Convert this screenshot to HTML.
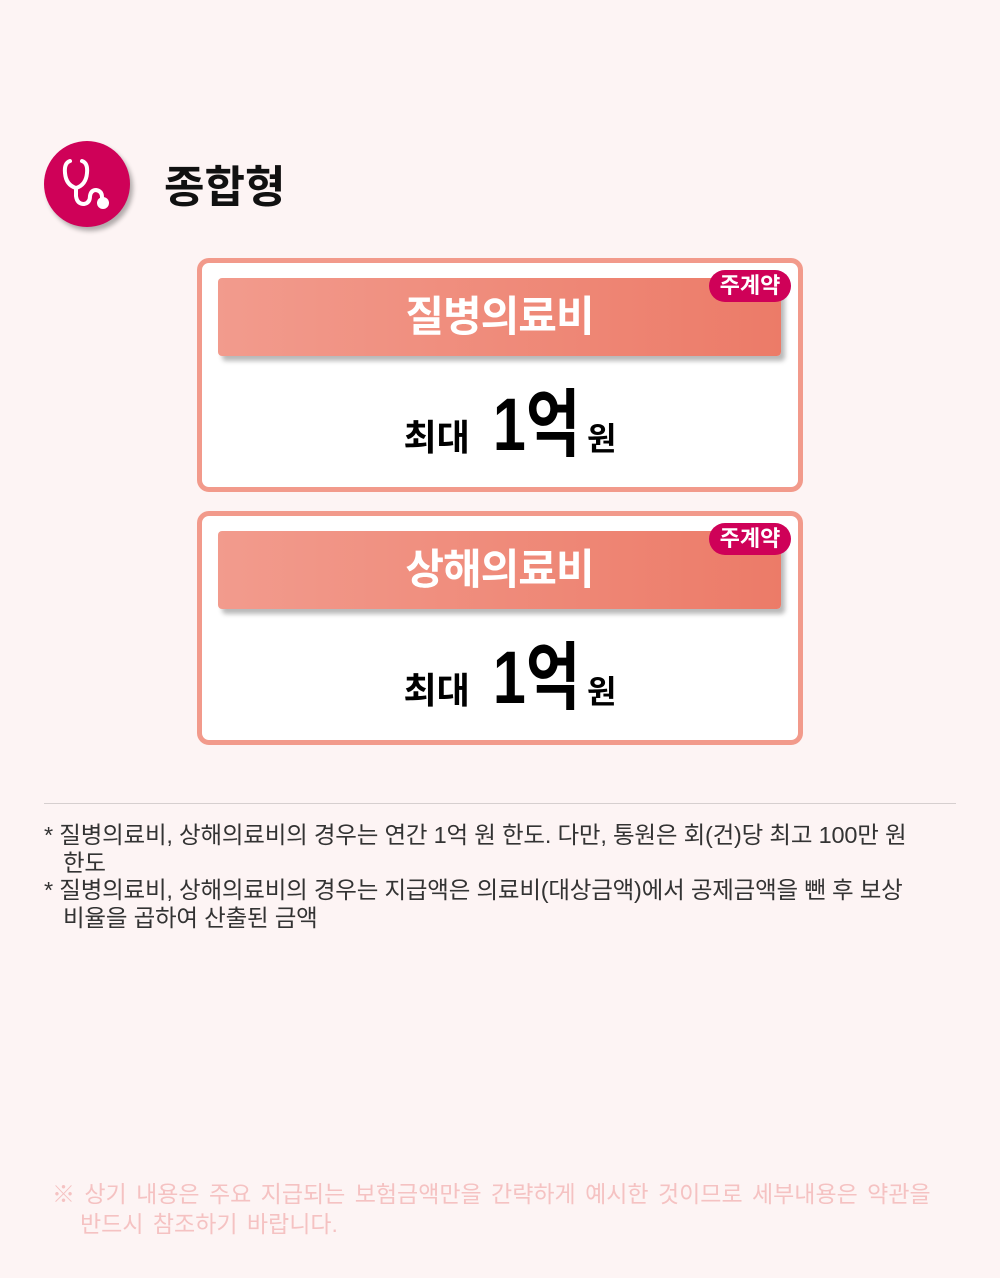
<!DOCTYPE html>
<html><head><meta charset="utf-8"><style>
body{margin:0;width:1000px;height:1278px;background:#fdf4f4;font-family:"Liberation Sans","Noto Sans CJK KR",sans-serif;position:relative;overflow:hidden;word-break:keep-all}
.icon{position:absolute;left:44px;top:141px;width:86px;height:86px;border-radius:50%;background:#cf0158;box-shadow:3px 4px 5px rgba(0,0,0,.3)}
.title{position:absolute;left:164px;top:151px;font-size:44px;font-weight:700;color:#111;letter-spacing:0px}
.box{position:absolute;left:197px;width:596px;height:224px;border:5px solid #f29a8b;border-radius:12px;background:#fff}
.hd{position:absolute;left:16px;top:15px;width:563px;height:78px;border-radius:4px;background:linear-gradient(90deg,#f29b8d,#ec7b68);box-shadow:4px 5px 5px rgba(0,0,0,.28);color:#fff;font-size:42px;font-weight:700;text-align:center;line-height:78px;letter-spacing:-1px}
.bd{position:absolute;left:507px;top:7px;width:82px;height:32px;border-radius:16px;background:#cf0158;color:#fff;font-size:22px;font-weight:700;text-align:center;line-height:32px}
.amt{position:absolute;left:10px;width:100%;top:102px;text-align:center;color:#000;font-weight:700;white-space:nowrap}
.amt .a{font-size:36px;margin-right:20px}.amt .b{font-size:74px;display:inline-block;transform:scaleX(.8);margin:0 -8px}.amt .c{font-size:32px;margin-left:4px}
hr{position:absolute;left:44px;top:803px;width:912px;margin:0;border:0;border-top:1px solid #d6cfcf}
.notes{position:absolute;left:44px;top:822px;width:905px;font-size:23.5px;line-height:27.5px;color:#333;letter-spacing:-0.2px}
.notes div{padding-left:19px;text-indent:-19px}
.foot{position:absolute;left:52px;top:1179px;width:905px;font-size:23px;line-height:30px;color:#f5c2c2;padding-left:28px;text-indent:-28px;box-sizing:border-box;word-spacing:3px}
</style></head><body>
<div class="icon"><svg width="86" height="86" viewBox="0 0 86 86"><path d="M26 20 Q20 22 21 32 Q22 44 32 47 Q42 44 43 32 Q44 22 38 20 M32 47 L32 55 Q33 63 40 63 Q46 62 46 55 Q47 49 52 49 Q58 50 58 56 L58 60" fill="none" stroke="#fff" stroke-width="4" stroke-linecap="round"/><circle cx="59" cy="62" r="6" fill="#fff"/></svg></div>
<div class="title">종합형</div>
<div class="box" style="top:258px"><div class="hd">질병의료비</div><div class="bd">주계약</div><div class="amt"><span class="a">최대</span><span class="b">1억</span><span class="c">원</span></div></div>
<div class="box" style="top:511px"><div class="hd">상해의료비</div><div class="bd">주계약</div><div class="amt"><span class="a">최대</span><span class="b">1억</span><span class="c">원</span></div></div>
<hr>
<div class="notes"><div>* 질병의료비, 상해의료비의 경우는 연간 1억 원 한도. 다만, 통원은 회(건)당 최고 100만 원 한도</div><div>* 질병의료비, 상해의료비의 경우는 지급액은 의료비(대상금액)에서 공제금액을 뺀 후 보상 비율을 곱하여 산출된 금액</div></div>
<div class="foot">※ 상기 내용은 주요 지급되는 보험금액만을 간략하게 예시한 것이므로 세부내용은 약관을 반드시 참조하기 바랍니다.</div>
</body></html>
